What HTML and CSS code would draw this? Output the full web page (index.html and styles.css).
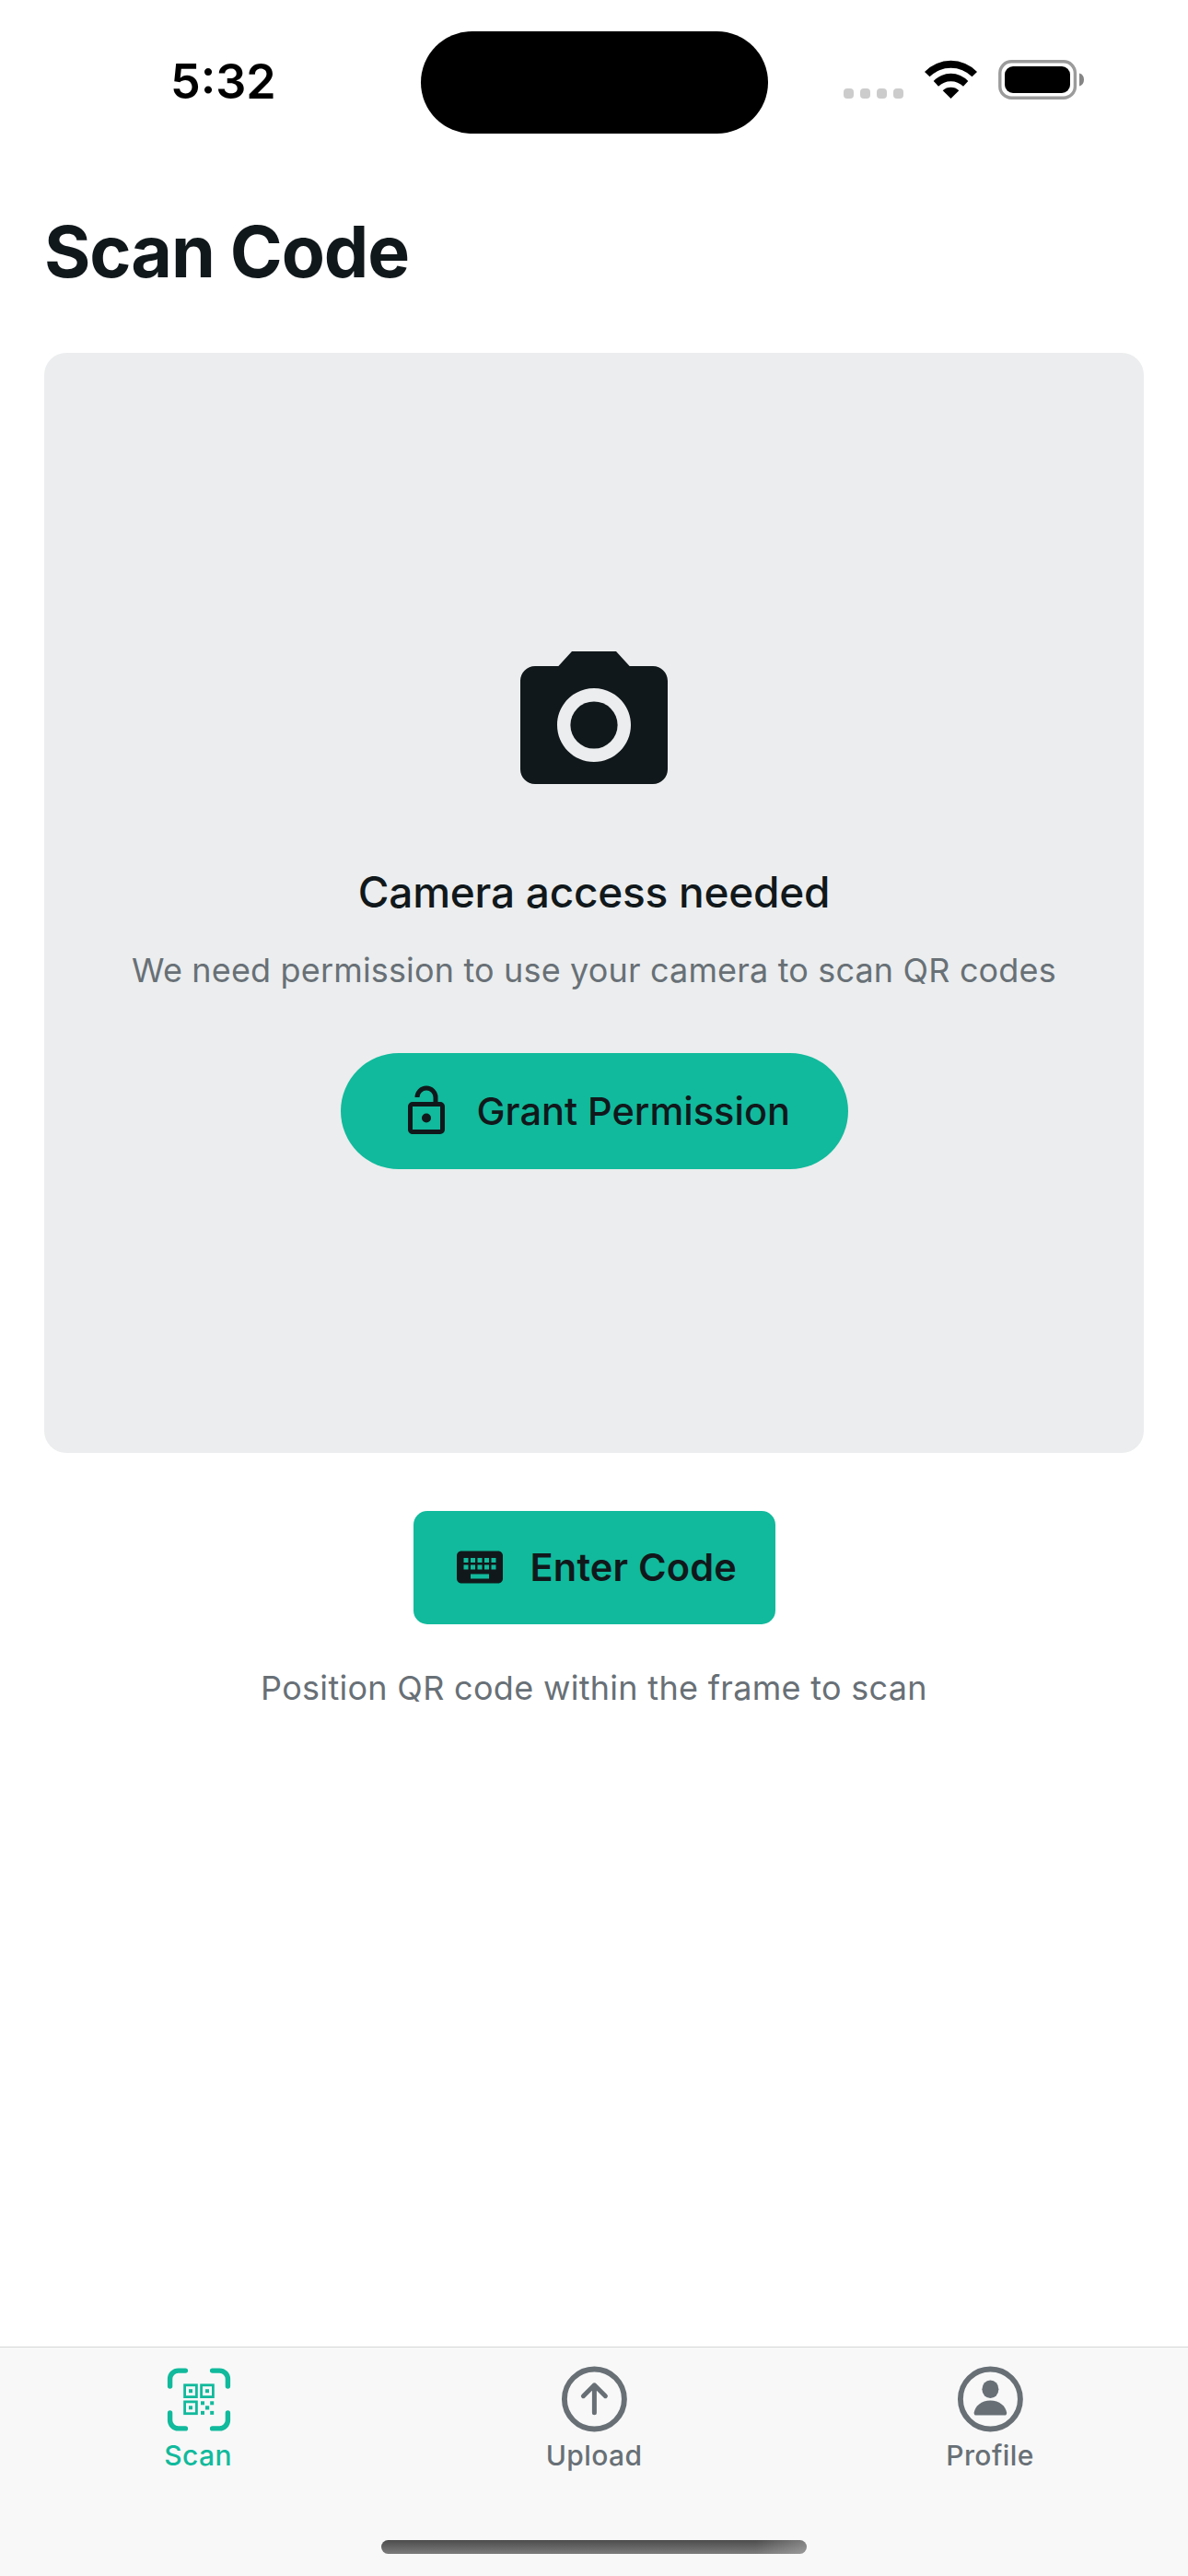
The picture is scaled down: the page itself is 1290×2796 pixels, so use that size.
FILE: index.html
```html
<!DOCTYPE html>
<html lang="en">
<head>
<meta charset="utf-8">
<title>Scan Code</title>
<link rel="stylesheet" href="styles.css">
</head>
<body>
<div class="screen">
  <div class="status-bar">
    <div class="time">5:32</div>
    <div class="island"></div>
    <div class="status-icons">
      <div class="signal"><span></span><span></span><span></span><span></span></div>
      <svg class="wifi" viewBox="0 0 57 42" width="57" height="42">
        <path d="M0 13A39.5 39.5 0 0 1 57 13L51.5 18.3A32.5 32.5 0 0 0 5.5 18.3Z"/>
        <path d="M9.7 23A25.5 25.5 0 0 1 47.3 23L42 28.7A19.5 19.5 0 0 0 15 28.7Z"/>
        <path d="M19.7 33.2A13 13 0 0 1 37.3 33.2L28.5 42Z"/>
      </svg>
      <svg class="battery" viewBox="0 0 94 43" width="94" height="43">
        <rect x="1.8" y="1.8" width="81.6" height="39.4" rx="12.5" fill="none" stroke="#9b9b9b" stroke-width="3.4"/>
        <rect x="7" y="7" width="71" height="29" rx="9"/>
        <path d="M88 14.5A7.4 7.4 0 0 1 88 28.5Z" fill="#858585"/>
      </svg>
    </div>
  </div>

  <h1 class="page-title">Scan Code</h1>

  <main class="content">
    <section class="camera-card">
      <svg class="camera-icon" viewBox="0 0 24 24" width="192" height="192">
        <path d="M9 2L7.17 4H4c-1.1 0-2 .9-2 2v12c0 1.1.9 2 2 2h16c1.1 0 2-.9 2-2V6c0-1.1-.9-2-2-2h-3.17L15 2H9zm3 15c-2.76 0-5-2.24-5-5s2.24-5 5-5 5 2.24 5 5-2.24 5-5 5z"/>
        <circle cx="12" cy="12" r="3.2"/>
      </svg>
      <h2 class="card-title">Camera access needed</h2>
      <p class="card-text">We need permission to use your camera to scan QR codes</p>
      <button class="btn grant">
        <svg viewBox="0 0 24 24" width="60" height="60">
          <path d="M18 20V10H6v10h12M18 8a2 2 0 0 1 2 2v10a2 2 0 0 1-2 2H6c-1.11 0-2-.9-2-2V10a2 2 0 0 1 2-2h9V6a3 3 0 0 0-3-3 3 3 0 0 0-3 3H7a5 5 0 0 1 5-5 5 5 0 0 1 5 5v2h1m-6 9a2 2 0 0 1-2-2 2 2 0 0 1 2-2 2 2 0 0 1 2 2 2 2 0 0 1-2 2z"/>
        </svg>
        <span>Grant Permission</span>
      </button>
    </section>
    <button class="btn enter">
      <svg viewBox="0 0 24 24" width="60" height="60">
        <path d="M20 5H4c-1.1 0-1.99.9-1.99 2L2 17c0 1.1.9 2 2 2h16c1.1 0 2-.9 2-2V7c0-1.1-.9-2-2-2zm-9 3h2v2h-2V8zm0 3h2v2h-2v-2zM8 8h2v2H8V8zm0 3h2v2H8v-2zm-1 2H5v-2h2v2zm0-3H5V8h2v2zm9 7H8v-2h8v2zm0-4h-2v-2h2v2zm0-3h-2V8h2v2zm3 3h-2v-2h2v2zm0-3h-2V8h2v2z"/>
      </svg>
      <span>Enter Code</span>
    </button>
    <p class="hint">Position QR code within the frame to scan</p>
  </main>

  <footer class="tab-bar">
    <nav class="tabs">
      <a class="tab active">
        <svg viewBox="0 0 72 72" width="72" height="72">
          <g fill="none" stroke="currentColor" stroke-width="5.4" stroke-linecap="round">
            <path d="M22.4 5.1H14.6A9 9 0 0 0 5.6 14.1V22M51.6 5.1H59.4A9 9 0 0 1 68.4 14.1V22M68.4 51V58.9A9 9 0 0 1 59.4 67.9H51.6M22.4 67.9H14.6A9 9 0 0 1 5.6 58.9V51"/>
          </g>
          <g fill="none" stroke="currentColor" stroke-width="2.8">
            <rect x="21.6" y="20.8" width="12.8" height="12.8"/>
            <rect x="39.6" y="20.8" width="12.8" height="12.8"/>
            <rect x="21.6" y="38.9" width="12.8" height="12.8"/>
          </g>
          <g fill="currentColor">
            <rect x="26" y="25.2" width="4" height="4"/>
            <rect x="44" y="25.2" width="4" height="4"/>
            <rect x="26" y="43.3" width="4" height="4"/>
            <rect x="39" y="38.3" width="4" height="4"/>
            <rect x="49.2" y="38.3" width="4" height="4"/>
            <rect x="44" y="43.3" width="4.2" height="4.2"/>
            <rect x="39" y="48.9" width="4" height="4"/>
            <rect x="49.2" y="48.9" width="4" height="4"/>
          </g>
        </svg>
        <span>Scan</span>
      </a>
      <a class="tab">
        <svg viewBox="0 0 72 72" width="72" height="72" fill="none" stroke="currentColor" stroke-linecap="round" stroke-linejoin="round">
          <circle cx="36.4" cy="36" r="32.5" stroke-width="5.9"/>
          <path d="M36.4 50.7V20.8M24.4 32.7L36.4 20.8L48.4 32.7" stroke-width="5"/>
        </svg>
        <span>Upload</span>
      </a>
      <a class="tab">
        <svg viewBox="0 0 72 72" width="72" height="72" fill="currentColor">
          <circle cx="36.4" cy="36" r="32.5" fill="none" stroke="currentColor" stroke-width="5.9"/>
          <ellipse cx="36.4" cy="25.2" rx="9" ry="9.8"/>
          <path d="M36.4 37.5C26.5 37.5 20 43.5 18.7 50.5C18.4 52.4 19.3 53.6 20.8 53.6H52C53.5 53.6 54.4 52.4 54.1 50.5C52.8 43.5 46.3 37.5 36.4 37.5Z"/>
        </svg>
        <span>Profile</span>
      </a>
    </nav>
    <div class="home-indicator"></div>
  </footer>
</div>
</body>
</html>
```
FILE: styles.css
```css
* { box-sizing: border-box; }

body {
  margin: 0;
  background: #fff;
  color: #11181b;
  font-family: Inter, "Liberation Sans", sans-serif;
}

h1, h2, p { margin: 0; }

svg { display: block; flex: none; }

.screen {
  display: flex;
  flex-direction: column;
  width: 1290px;
  height: 2796px;
  overflow: hidden;
}

/* Status bar */
.status-bar {
  display: grid;
  grid-template-columns: 457px 377px 1fr;
  height: 177px;
  align-items: center;
  color: #000;
}

.time {
  padding-left: 185px;
  font-size: 52px;
  font-weight: 600;
  line-height: 64px;
}

.island {
  height: 111px;
  margin-top: 1px;
  border-radius: 56px;
  background: #000;
}

.status-icons {
  display: flex;
  align-items: flex-end;
  height: 43px;
  padding-left: 82px;
  margin-bottom: 4px;
}

.signal {
  display: flex;
  gap: 7px;
  margin-bottom: 1px;
}

.signal span {
  width: 11px;
  height: 11px;
  border-radius: 4px;
  background: #ccc;
}

.wifi { margin: 0 0 1px 23px; }

.battery { margin-left: 23px; }

/* Page */
.page-title {
  padding: 50px 48px 64px;
  font-size: 77px;
  font-weight: 700;
  line-height: 92px;
  letter-spacing: -1.1px;
}

.content {
  display: flex;
  flex: 1;
  flex-direction: column;
  align-items: center;
}

.camera-card {
  display: flex;
  flex-direction: column;
  align-items: center;
  justify-content: center;
  width: 1194px;
  height: 1194px;
  border-radius: 24px;
  background: #ebedee;
}

.camera-icon { fill: #11181b; }

.card-title {
  margin-top: 55px;
  font-size: 46px;
  font-weight: 500;
  line-height: 60px;
  letter-spacing: -0.25px;
}

.card-text,
.hint {
  color: #687076;
  font-size: 36px;
  line-height: 50px;
  white-space: nowrap;
}

.card-text {
  margin-top: 30px;
  letter-spacing: 0.16px;
}

.hint {
  margin-top: 44px;
  letter-spacing: 0.3px;
}

.btn {
  display: flex;
  align-items: center;
  gap: 25px;
  border: 0;
  background: #11ba9c;
  color: #11181b;
  fill: #11181b;
  font-family: inherit;
  font-size: 41.5px;
  line-height: 54px;
  white-space: nowrap;
}

.grant {
  width: 551px;
  height: 126px;
  margin-top: 65px;
  padding: 0 0 0 63px;
  border-radius: 63px;
  font-weight: 500;
}

.enter {
  width: 393px;
  height: 123px;
  margin-top: 63px;
  padding: 0 0 1px 42px;
  border-radius: 15px;
  font-weight: 600;
  letter-spacing: 0.2px;
}

/* Tab bar */
.tab-bar {
  display: flex;
  flex-direction: column;
  align-items: center;
  justify-content: space-between;
  height: 249px;
  padding-bottom: 24px;
  border-top: 1px solid #d5d6d7;
  background: #f8f8f8;
}

.tabs {
  display: grid;
  grid-template-columns: repeat(3, 1fr);
  width: 100%;
  padding-top: 20px;
}

.tab {
  display: flex;
  flex-direction: column;
  align-items: center;
  gap: 7px;
  color: #687076;
  font-size: 30px;
  font-weight: 500;
  line-height: 36px;
  letter-spacing: 0.4px;
}

.tab.active { color: #11ba9c; }

.home-indicator {
  width: 462px;
  height: 15px;
  border-radius: 8px;
  background:
    linear-gradient(90deg, transparent 88%, rgba(200, 200, 200, 0.4)),
    linear-gradient(#4c4c4c, #7c7c7c);
}
```
